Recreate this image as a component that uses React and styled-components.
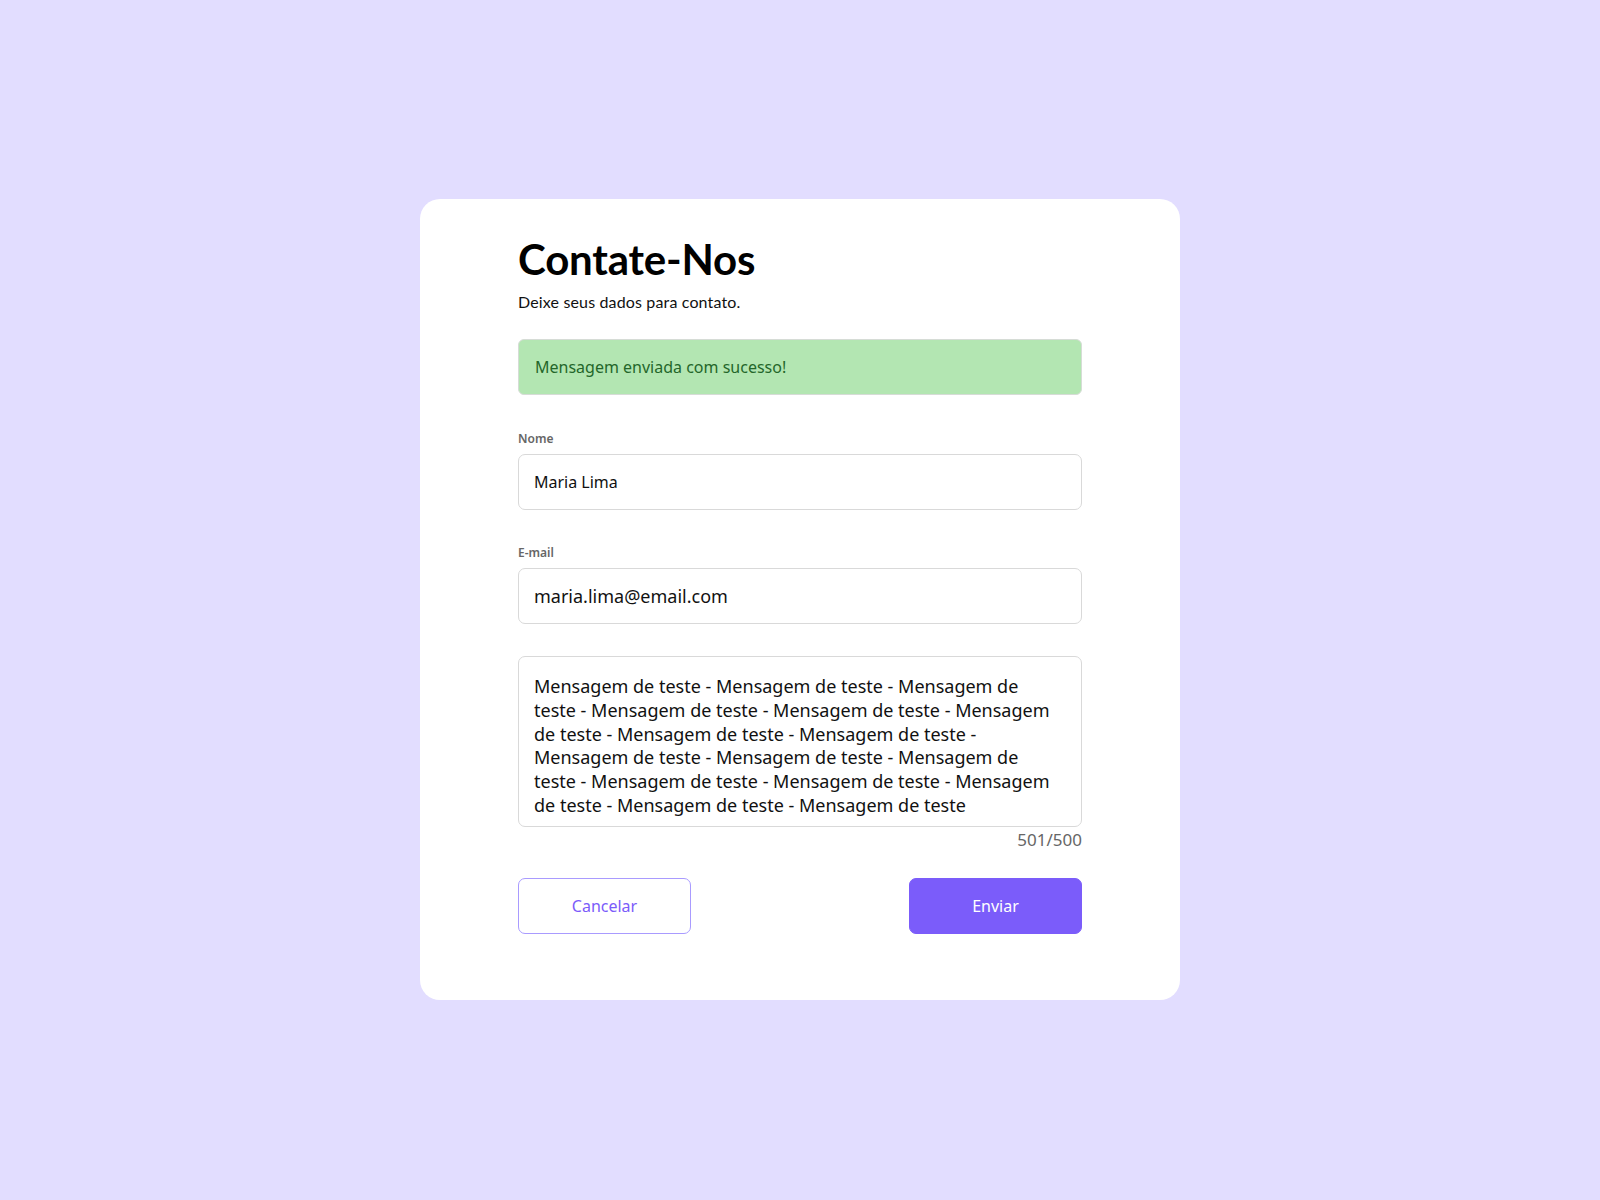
import React, { useState } from "react";
import styled, { createGlobalStyle } from "styled-components";

const Global = createGlobalStyle`
  html, body { margin: 0; padding: 0; }
  body {
    background: #e2ddff;
    font-family: "Noto Sans", "Open Sans", sans-serif;
    color: #111;
  }
  * { box-sizing: border-box; }
`;

const Page = styled.div`
  min-height: 1200px;
  display: flex;
  justify-content: center;
  align-items: flex-start;
  padding-top: 199px;
`;

const Card = styled.form`
  width: 760px;
  background: #fff;
  border-radius: 20px;
  padding: 34px 98px 66px;
  display: flex;
  flex-direction: column;
`;

const Title = styled.h1`
  margin: 0;
  font-family: Lato, "Noto Sans", sans-serif;
  font-weight: 700;
  font-size: 42px;
  line-height: 52px;
  color: #000;
  letter-spacing: -0.2px;
`;

const Subtitle = styled.p`
  margin: 7px 0 0;
  font-family: Lato, "Noto Sans", sans-serif;
  font-size: 16px;
  line-height: 20px;
  letter-spacing: 0.15px;
  color: #111;
`;

const Alert = styled.div`
  margin-top: 27px;
  height: 56px;
  display: flex;
  align-items: center;
  padding: 0 16px;
  background: #b3e6b2;
  border: 1px solid #d6dcd6;
  border-radius: 6px;
  font-size: 16px;
  color: #24662a;
`;

const Field = styled.div`
  margin-top: ${(p) => p.$gap}px;
  display: flex;
  flex-direction: column;
`;

const Label = styled.label`
  font-size: 12px;
  font-weight: 600;
  line-height: 16px;
  color: #666;
  margin-bottom: 7px;
`;

const Input = styled.input`
  height: 56px;
  width: 100%;
  border: 1px solid #d9d9d9;
  border-radius: 7px;
  padding: 0 15px;
  font-family: "Noto Sans", sans-serif;
  font-size: ${(p) => p.$size}px;
  color: #111;
  background: #fff;
  outline: none;
`;

const TextArea = styled.textarea`
  height: 171px;
  width: 100%;
  border: 1px solid #d9d9d9;
  border-radius: 7px;
  padding: 18px 30px 12px 15px;
  font-family: "Noto Sans", sans-serif;
  font-size: 18px;
  line-height: 23.8px;
  color: #111;
  resize: none;
  overflow: hidden;
  outline: none;
`;

const Counter = styled.div`
  align-self: flex-end;
  margin-top: 2px;
  font-size: 17px;
  line-height: 22px;
  color: #666;
`;

const Actions = styled.div`
  margin-top: 27px;
  display: flex;
  justify-content: space-between;
`;

const Button = styled.button`
  width: 173px;
  height: 56px;
  border-radius: 7px;
  font-family: "Noto Sans", sans-serif;
  font-size: 16px;
  cursor: pointer;
  border: 1.5px solid ${(p) => (p.$primary ? "#7b5cfa" : "#a99bff")};
  background: ${(p) => (p.$primary ? "#7b5cfa" : "#fff")};
  color: ${(p) => (p.$primary ? "#fff" : "#7b5cfa")};
`;

const message = Array(16).fill("Mensagem de teste").join(" - ");

export default function App() {
  const [name, setName] = useState("Maria Lima");
  const [email, setEmail] = useState("maria.lima@email.com");
  const [msg, setMsg] = useState(message);
  return (
    <>
      <Global />
      <Page>
        <Card onSubmit={(e) => e.preventDefault()}>
          <Title>Contate-Nos</Title>
          <Subtitle>Deixe seus dados para contato.</Subtitle>
          <Alert>Mensagem enviada com sucesso!</Alert>
          <Field $gap={36}>
            <Label htmlFor="nome">Nome</Label>
            <Input id="nome" $size={16} value={name} onChange={(e) => setName(e.target.value)} />
          </Field>
          <Field $gap={35}>
            <Label htmlFor="email">E-mail</Label>
            <Input id="email" $size={18} value={email} onChange={(e) => setEmail(e.target.value)} />
          </Field>
          <Field $gap={32}>
            <TextArea value={msg} onChange={(e) => setMsg(e.target.value)} />
            <Counter>501/500</Counter>
          </Field>
          <Actions>
            <Button type="button">Cancelar</Button>
            <Button type="submit" $primary>Enviar</Button>
          </Actions>
        </Card>
      </Page>
    </>
  );
}
